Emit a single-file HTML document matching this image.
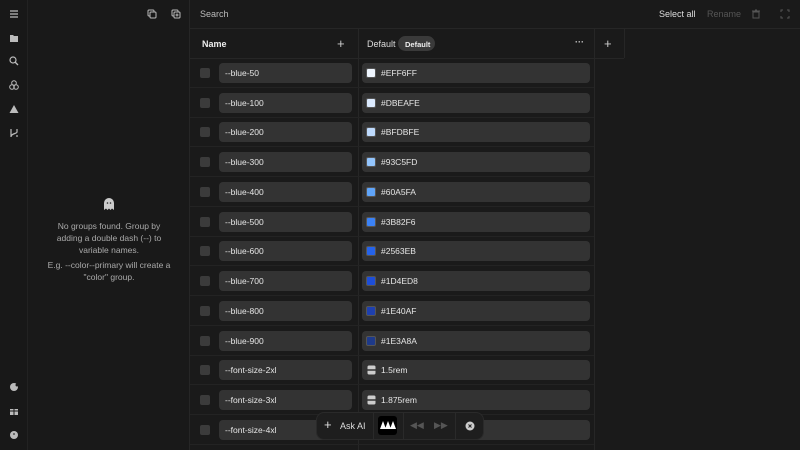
<!DOCTYPE html>
<html><head><meta charset="utf-8"><style>
*{margin:0;padding:0;box-sizing:border-box}
body{width:800px;height:450px;background:#1a1a1a;font-family:"Liberation Sans",sans-serif;color:#ddd;position:relative;overflow:hidden;font-size:9px}
.a{position:absolute}
.ib{left:0;top:0;width:28px;height:450px;border-right:1px solid #222;background:#181818}
.pn{left:28px;top:0;width:162px;height:450px;border-right:1px solid #262626;background:#191919}
.row{position:absolute;left:190px;width:404px;height:30px;border-bottom:1px solid #232323}
.cb{position:absolute;left:10px;top:10px;width:10px;height:10px;border-radius:2px;background:#3b3b3b}
.nm{position:absolute;left:29px;top:5px;width:133px;height:20px;border-radius:4px;background:#333;color:#e6e6e6;padding:5px 6px;font-size:8.5px}
.vl{position:absolute;left:172px;top:5px;width:228px;height:20px;border-radius:4px;background:#333;color:#e6e6e6;padding:5px 0 0 19px;font-size:8.5px}
.sw{position:absolute;left:4px;top:5px;width:10px;height:10px;border-radius:2px;border:1px solid #555}
svg{position:absolute}
.et{position:absolute;left:28px;width:162px;text-align:center;color:#aaa;font-size:8.5px;line-height:12.5px;white-space:nowrap}
</style></head><body>
<div class="a ib"></div>
<div class="a pn"></div>
<div class="a" style="left:190px;top:28px;width:610px;height:1px;background:#262626"></div>
<div class="a" style="left:190px;top:58px;width:434px;height:1px;background:#262626"></div>
<div class="a" style="left:358px;top:29px;width:1px;height:421px;background:#262626"></div>
<div class="a" style="left:594px;top:29px;width:1px;height:421px;background:#262626"></div>
<div class="a" style="left:624px;top:29px;width:1px;height:29px;background:#262626"></div>
<svg style="left:9px;top:9px" width="10" height="10"><path d="M1 2h8M1 5h8M1 8h8" stroke="#bbb" stroke-width="1.2"/></svg>
<svg style="left:9px;top:33px" width="10" height="10"><path d="M1 2h3l1 1h4v6H1z" fill="#bbb"/></svg>
<svg style="left:9px;top:56px" width="10" height="10"><circle cx="4" cy="4" r="3" stroke="#bbb" stroke-width="1.2" fill="none"/><path d="M6 6l3 3" stroke="#bbb" stroke-width="1.3"/></svg>
<svg style="left:9px;top:80px" width="10" height="10"><circle cx="5" cy="3" r="2.3" fill="none" stroke="#bbb"/><circle cx="3" cy="7" r="2.3" fill="none" stroke="#bbb"/><circle cx="7" cy="7" r="2.3" fill="none" stroke="#bbb"/></svg>
<svg style="left:9px;top:104px" width="10" height="10"><path d="M5 1L9.5 9H.5z" fill="#bbb"/></svg>
<svg style="left:9px;top:128px" width="10" height="10"><path d="M2 1v8M8 1v3c0 2-6 1-6 5M8 7v2" stroke="#bbb" fill="none" stroke-width="1.2"/></svg>
<svg style="left:9px;top:382px" width="10" height="10"><circle cx="5" cy="5" r="4" fill="#bbb"/><circle cx="8" cy="3" r="1.5" fill="#181818"/></svg>
<svg style="left:9px;top:406px" width="10" height="10"><rect x="1" y="3" width="8" height="6" fill="#bbb"/><path d="M5 3v6M1 5h8" stroke="#181818"/></svg>
<svg style="left:9px;top:430px" width="10" height="10"><circle cx="5" cy="5" r="4" fill="#bbb"/><path d="M5 3v2" stroke="#181818"/></svg>
<svg style="left:147px;top:9px" width="10" height="10"><rect x="1" y="1" width="6" height="6" rx="1" fill="none" stroke="#bbb"/><rect x="3" y="3" width="6" height="6" rx="1" fill="#191919" stroke="#bbb"/></svg>
<svg style="left:171px;top:9px" width="10" height="10"><rect x="1" y="1" width="6" height="6" rx="1" fill="none" stroke="#bbb"/><rect x="3" y="3" width="6" height="6" rx="1" fill="#191919" stroke="#bbb"/><path d="M6 4.5v3M4.5 6h3" stroke="#bbb"/></svg>
<svg style="left:102px;top:197px" width="14" height="14"><path d="M2 13V6a5 5 0 0110 0v7l-2-1.5-1.5 1.5L7 11.5 5.5 13 4 11.5z" fill="#ccc"/><circle cx="5.5" cy="6" r=".8" fill="#222"/><circle cx="8.5" cy="6" r=".8" fill="#222"/></svg>
<div class="et" style="top:220px">No groups found. Group by</div>
<div class="et" style="top:232px">adding a double dash (--) to</div>
<div class="et" style="top:244px">variable names.</div>
<div class="et" style="top:259px">E.g. --color--primary will create a</div>
<div class="et" style="top:271px">"color" group.</div>
<div class="a" style="left:200px;top:9px;color:#bbb">Search</div>
<div class="a" style="left:659px;top:9px;color:#ddd">Select all</div>
<div class="a" style="left:707px;top:9px;color:#555">Rename</div>
<svg style="left:751px;top:9px" width="10" height="10"><path d="M2 3h6v6H2zM1 2h8M4 1h2" stroke="#555" fill="none"/></svg>
<svg style="left:780px;top:9px" width="10" height="10"><path d="M1 3V1h2M7 1h2v2M9 7v2H7M3 9H1V7" stroke="#555" fill="none"/></svg>
<div class="a" style="left:202px;top:39px;font-weight:bold;color:#eee">Name</div>
<div class="a" style="left:337px;top:36px;font-size:13px;color:#ccc">+</div>
<div class="a" style="left:367px;top:39px;color:#ddd">Default</div>
<div class="a" style="left:398px;top:36px;width:37px;height:15px;border-radius:8px;background:#3a3a3a;font-size:7.5px;font-weight:bold;color:#eee;padding:3.5px 0 0 7px">Default</div>
<div class="a" style="left:575px;top:37px;color:#ccc;font-weight:bold">···</div>
<div class="a" style="left:604px;top:36px;font-size:13px;color:#ccc">+</div>
<div class="row" style="top:58px"><div class="cb"></div><div class="nm">--blue-50</div><div class="vl"><div class="sw" style="background:#EFF6FF"></div>#EFF6FF</div></div>
<div class="row" style="top:88px"><div class="cb"></div><div class="nm">--blue-100</div><div class="vl"><div class="sw" style="background:#DBEAFE"></div>#DBEAFE</div></div>
<div class="row" style="top:117px"><div class="cb"></div><div class="nm">--blue-200</div><div class="vl"><div class="sw" style="background:#BFDBFE"></div>#BFDBFE</div></div>
<div class="row" style="top:147px"><div class="cb"></div><div class="nm">--blue-300</div><div class="vl"><div class="sw" style="background:#93C5FD"></div>#93C5FD</div></div>
<div class="row" style="top:177px"><div class="cb"></div><div class="nm">--blue-400</div><div class="vl"><div class="sw" style="background:#60A5FA"></div>#60A5FA</div></div>
<div class="row" style="top:207px"><div class="cb"></div><div class="nm">--blue-500</div><div class="vl"><div class="sw" style="background:#3B82F6"></div>#3B82F6</div></div>
<div class="row" style="top:236px"><div class="cb"></div><div class="nm">--blue-600</div><div class="vl"><div class="sw" style="background:#2563EB"></div>#2563EB</div></div>
<div class="row" style="top:266px"><div class="cb"></div><div class="nm">--blue-700</div><div class="vl"><div class="sw" style="background:#1D4ED8"></div>#1D4ED8</div></div>
<div class="row" style="top:296px"><div class="cb"></div><div class="nm">--blue-800</div><div class="vl"><div class="sw" style="background:#1E40AF"></div>#1E40AF</div></div>
<div class="row" style="top:326px"><div class="cb"></div><div class="nm">--blue-900</div><div class="vl"><div class="sw" style="background:#1E3A8A"></div>#1E3A8A</div></div>
<div class="row" style="top:355px"><div class="cb"></div><div class="nm">--font-size-2xl</div><div class="vl"><svg style="left:5px;top:5px" width="9" height="10"><rect x=".5" y=".5" width="8" height="9" rx="1.5" fill="#ccc"/><path d="M0 5h9" stroke="#333" stroke-width="1.5"/></svg>1.5rem</div></div>
<div class="row" style="top:385px"><div class="cb"></div><div class="nm">--font-size-3xl</div><div class="vl"><svg style="left:5px;top:5px" width="9" height="10"><rect x=".5" y=".5" width="8" height="9" rx="1.5" fill="#ccc"/><path d="M0 5h9" stroke="#333" stroke-width="1.5"/></svg>1.875rem</div></div>
<div class="row" style="top:415px"><div class="cb"></div><div class="nm">--font-size-4xl</div><div class="vl"></div></div>
<div class="a" style="left:316px;top:412px;width:168px;height:28px;border-radius:8px;background:#1e1e1e;border:1px solid #2a2a2a"></div>
<div class="a" style="left:324px;top:418px;font-size:13px;color:#ddd;line-height:14px">+</div>
<div class="a" style="left:340px;top:421px;color:#ddd">Ask AI</div>
<div class="a" style="left:373px;top:412px;width:1px;height:28px;background:#2a2a2a"></div>
<div class="a" style="left:378px;top:416px;width:19px;height:19px;border-radius:3px;background:#000"></div>
<svg style="left:379px;top:420px" width="17" height="10"><path d="M1 9l3-8 3 8zM6 9l3-8 3 8zM11 9l3-8 3 8z" fill="#fff"/></svg>
<div class="a" style="left:403px;top:412px;width:1px;height:28px;background:#2a2a2a"></div>
<div class="a" style="left:410px;top:420px;color:#555;font-size:9px">◀◀</div>
<div class="a" style="left:434px;top:420px;color:#555;font-size:9px">▶▶</div>
<div class="a" style="left:455px;top:412px;width:1px;height:28px;background:#2a2a2a"></div>
<svg style="left:465px;top:421px" width="10" height="10"><circle cx="5" cy="5" r="4.5" fill="#ccc"/><path d="M3.5 3.5l3 3M6.5 3.5l-3 3" stroke="#222"/></svg>
</body></html>
